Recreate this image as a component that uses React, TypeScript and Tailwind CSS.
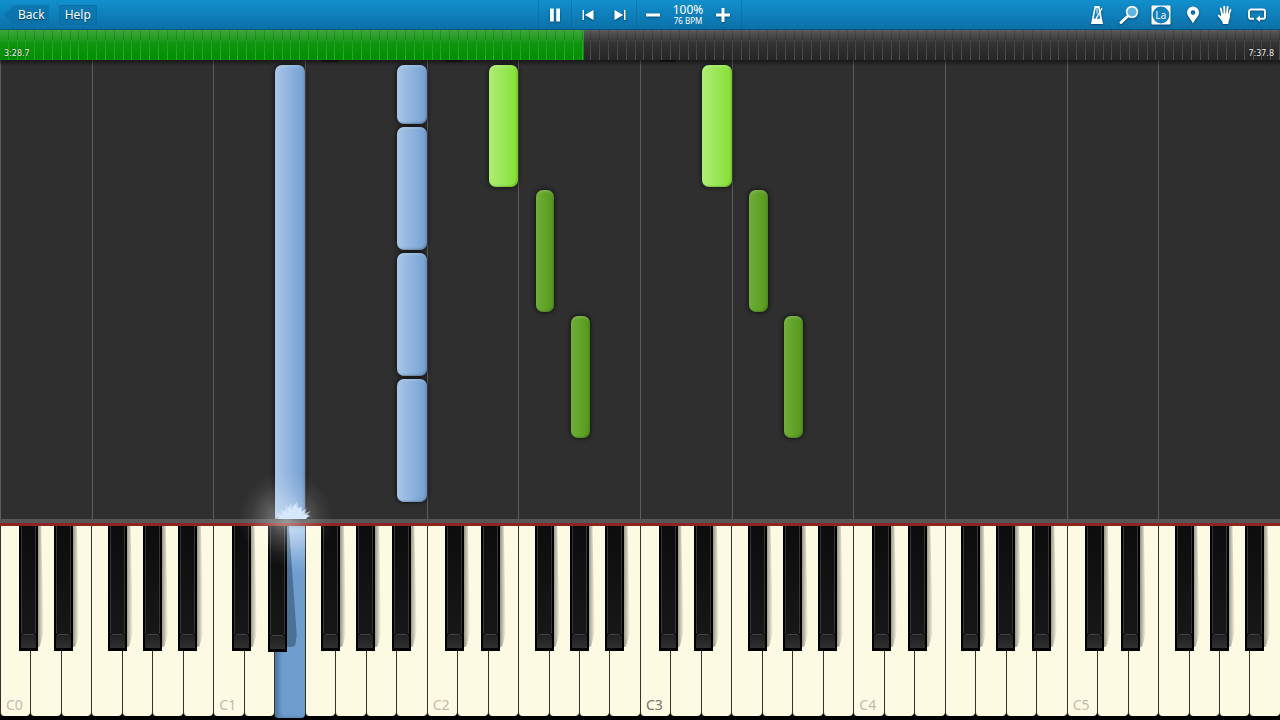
import type { ReactNode } from "react";

const OCTAVES = [0, 1, 2, 3, 4, 5];
const WHITE_KEYS = ["C", "D", "E", "F", "G", "A", "B"];

// left edge of each black key inside its octave
const BLACK_KEYS = [
  { name: "C#", left: "left-[8.7%]" },
  { name: "D#", left: "left-[25.5%]" },
  { name: "F#", left: "left-[50.6%]" },
  { name: "G#", left: "left-[67.1%]" },
  { name: "A#", left: "left-[83.6%]" },
];

const BLACK_OFFSET: Record<string, number> = {
  "C#": 0.087,
  "D#": 0.255,
  "F#": 0.506,
  "G#": 0.671,
  "A#": 0.836,
};

const ROLL_UNITS = 459;

const notes = [
  { octave: 1, key: "E", top: 5, length: 454, hand: "left" },
  { octave: 1, key: "B", top: 5, length: 59, hand: "left" },
  { octave: 1, key: "B", top: 67, length: 123, hand: "left" },
  { octave: 1, key: "B", top: 193, length: 123, hand: "left" },
  { octave: 1, key: "B", top: 319, length: 123, hand: "left" },
  { octave: 2, key: "E", top: 5, length: 122, hand: "right" },
  { octave: 2, key: "F#", top: 130, length: 122, hand: "right" },
  { octave: 2, key: "G#", top: 256, length: 122, hand: "right" },
  { octave: 3, key: "E", top: 5, length: 122, hand: "right" },
  { octave: 3, key: "F#", top: 130, length: 122, hand: "right" },
  { octave: 3, key: "G#", top: 256, length: 122, hand: "right" },
];

const upcoming = [
  { octave: 1, key: "F#" },
  { octave: 2, key: "C#" },
  { octave: 3, key: "C#" },
];

function keyLeft(octave: number, key: string) {
  const inside = key.endsWith("#")
    ? BLACK_OFFSET[key]
    : WHITE_KEYS.indexOf(key) / 7;
  return `${((octave + inside) / OCTAVES.length) * 100}%`;
}

function noteColor(hand: string, black: boolean) {
  if (hand === "left") return "bg-linear-to-r from-[#a9c6e8] to-[#739fd2]";
  return black
    ? "bg-linear-to-r from-[#6fae38] to-[#55991a]"
    : "bg-linear-to-r from-[#aeee72] to-[#84df31]";
}

function IconButton({ label, children }: { label: string; children: ReactNode }) {
  return (
    <button
      type="button"
      aria-label={label}
      className="flex h-full w-8 items-center justify-center drop-shadow-[0_1px_1px_rgba(0,40,80,0.6)]"
    >
      {children}
    </button>
  );
}

function Toolbar() {
  return (
    <header className="grid h-[30px] grid-cols-[1fr_auto_1fr] border-b border-[#075682] bg-linear-to-b from-[#1190cd] to-[#0c70a8] text-white">
      <div className="flex items-center gap-2.5 pl-1">
        <button
          type="button"
          className="h-5 bg-[#0b6fa6]/70 pr-1 pl-3.5 text-xs [clip-path:polygon(0_50%,10px_0,100%_0,100%_100%,10px_100%)] text-shadow-[0_1px_1px_rgba(0,0,0,0.5)]"
        >
          Back
        </button>
        <button
          type="button"
          className="h-5 rounded-xs border border-[#0a6497]/40 bg-[#0b6fa6]/60 px-[5px] text-xs/4 text-shadow-[0_1px_1px_rgba(0,0,0,0.5)]"
        >
          Help
        </button>
      </div>

      <div className="flex border-x border-[#0a6599]/50 pr-0.5">
        <IconButton label="Pause">
          <svg width="12" height="14" viewBox="0 0 12 14" fill="#fff">
            <path d="M1 0.5h3.800v13H1zM7.200 0.5H11v13H7.200z" />
          </svg>
        </IconButton>
        <div className="flex border-x border-[#0a6599]/50">
          <IconButton label="Previous">
            <svg width="12" height="12" viewBox="0 0 12 12" fill="#fff">
              <path d="M0.500 1h1.500v10H0.500zM11.500 1v10L2.800 6z" />
            </svg>
          </IconButton>
          <IconButton label="Next">
            <svg width="12" height="12" viewBox="0 0 12 12" fill="#fff">
              <path d="M0.500 1v10L9.200 6zM10 1h1.500v10H10z" />
            </svg>
          </IconButton>
        </div>
        <IconButton label="Slower">
          <svg width="14" height="14" viewBox="0 0 14 14" fill="#fff">
            <path d="M0 5.500h14v3H0z" />
          </svg>
        </IconButton>
        <div className="flex w-[38px] flex-col items-center justify-center">
          <span className="text-xs/3">100%</span>
          <span className="text-[8px]/[10px] whitespace-nowrap">76 BPM</span>
        </div>
        <IconButton label="Faster">
          <svg width="14" height="14" viewBox="0 0 14 14" fill="#fff">
            <path d="M0 5.500h5.500V0h3v5.500H14v3H8.500V14h-3V8.500H0z" />
          </svg>
        </IconButton>
      </div>

      <div className="flex justify-end pr-[7px]">
        <IconButton label="Metronome">
          <svg width="14" height="20" viewBox="0 0 14 20">
            <path d="M4.500 1h5L13 19H1z" fill="#fff" />
            <path d="M5.700 3.200h2.700l1.800 10.500H3.600z" fill="#1581b9" />
            <path d="M5.900 14 12 3.200" stroke="#fff" strokeWidth="1.400" />
            <path d="M7 3.500v5" stroke="#fff" strokeWidth="1" />
          </svg>
        </IconButton>
        <IconButton label="Zoom">
          <svg width="20" height="20" viewBox="0 0 20 20" fill="none" stroke="#fff">
            <circle cx="13" cy="7" r="5.400" fill="#62b4e0" strokeWidth="1.600" />
            <path d="m9 11-7 6.600" strokeWidth="2.800" strokeLinecap="round" />
          </svg>
        </IconButton>
        <IconButton label="Note names">
          <svg width="20" height="20" viewBox="0 0 20 20">
            <rect x="0.500" y="0.500" width="19" height="19" rx="1" fill="#fff" />
            <circle cx="10" cy="10" r="8.400" fill="#1280ba" />
            <text x="10" y="13.500" textAnchor="middle" fontSize="10" fill="#fff">
              La
            </text>
          </svg>
        </IconButton>
        <IconButton label="Bookmarks">
          <svg width="14" height="18" viewBox="0 0 14 18" fill="#fff">
            <path
              fillRule="evenodd"
              d="M7 0.500a6 6 0 0 1 6 6c0 4-4 6.500-6 11-2-4.500-6-7-6-11a6 6 0 0 1 6-6zM7 4.300a2.300 2.300 0 1 0 0 4.600 2.300 2.300 0 0 0 0-4.600z"
            />
          </svg>
        </IconButton>
        <IconButton label="Hands">
          <svg width="16" height="20" viewBox="0 0 16 20">
            <g stroke="#fff" strokeWidth="1.900" strokeLinecap="round" fill="none">
              <path d="M5.300 10 3.700 3.500M7.500 9.500 7.200 1.600M9.800 9.500l.8-7.500M11.500 10.500l2-5.500" />
              <path d="M5 14.500 1.800 10.600" />
            </g>
            <path d="M4.400 8.500h8.100l.4 2.500c.3 2.500-1.400 4-1.600 8H5.800c0-2.500-1.500-3.500-2.600-6z" fill="#fff" />
          </svg>
        </IconButton>
        <IconButton label="Loop">
          <svg width="18" height="14" viewBox="0 0 18 14" fill="none">
            <path
              d="M6 10.800H3a2 2 0 0 1-2-2V3.500a2 2 0 0 1 2-2h12a2 2 0 0 1 2 2v5.300a2 2 0 0 1-2 2h-3"
              stroke="#fff"
              strokeWidth="1.900"
            />
            <path d="M8 10.800 12 7.600v6.400z" fill="#fff" />
          </svg>
        </IconButton>
      </div>
    </header>
  );
}

function Timeline() {
  const elapsed = 208.7;
  const total = 457.8;

  return (
    <div className="relative h-[30px] bg-linear-to-b from-[#5a5a5a] via-[#333333] via-45% to-[#262626] font-['DejaVu_Sans',sans-serif] text-[8px]/[10px] text-[#f0f0f0]">
      <div
        className="absolute inset-y-0 left-0 bg-linear-to-b from-[#3aa83a] via-[#109510] via-45% to-[#009000]"
        style={{ width: `${(elapsed / total) * 100}%` }}
      />
      {/* one tick per bar */}
      <div className="absolute inset-0 flex">
        {Array.from({ length: 145 }, (_, i) => (
          <div key={i} className="flex flex-1 flex-col items-end">
            <div className="h-[10px] w-px bg-black/15" />
            <div className="w-px flex-1 bg-linear-to-b from-white/5 to-white/20" />
          </div>
        ))}
      </div>
      <div className="relative flex h-full items-end justify-between px-1 pb-px text-shadow-[0_0_2px_rgba(0,0,0,0.8)]">
        <span>3:28.7</span>
        <span className="pr-0.5">7:37.8</span>
      </div>
    </div>
  );
}

function Spark() {
  return (
    <div className="pointer-events-none absolute bottom-0 left-1/2 z-20">
      <div className="absolute -top-12 -left-13 size-24 rounded-full bg-[radial-gradient(circle,rgba(255,255,255,0.45)_0%,rgba(255,255,255,0.2)_30%,rgba(255,255,255,0.06)_52%,rgba(255,255,255,0)_70%)]" />
      <svg
        className="absolute -top-5 -left-4 max-w-none"
        width="40"
        height="20"
        viewBox="0 0 40 20"
        fill="#d6e8fd"
      >
        <path d="M4 20 3 14l4 2 0-6 4 4 1-9 3 7 2-8 3 7 3-9 2 9 3-4 0 6 5-4-2 5 6-2-4 4 4 1-5 2z" opacity="0.6" />
        <path d="M5 20l1-4 3 0 1-5 3 2 2-6 3 4 3-7 2 6 4-2 0 5 4-2-2 4 6 1-3 4z" />
      </svg>
    </div>
  );
}

function Roll() {
  return (
    <main className="relative min-h-64 flex-1 bg-[#2f2f2f]">
      <div className="absolute inset-0 flex">
        {OCTAVES.map((octave) => (
          <div key={octave} className="flex flex-1">
            <div className="flex-3 border-l border-[#5c5c5c]" />
            <div className="flex-4 border-l border-[#5c5c5c]" />
          </div>
        ))}
      </div>
      <div className="absolute inset-x-0 top-0 h-1.5 bg-linear-to-b from-black/50 to-transparent" />

      {upcoming.map((n) => (
        <div
          key={`${n.octave}${n.key}`}
          className="absolute top-0 h-0.5 w-[1.4%] rounded-b-full bg-black/50"
          style={{ left: keyLeft(n.octave, n.key) }}
        />
      ))}

      {notes.map((n) => {
        const black = n.key.endsWith("#");
        const playing = n.top + n.length >= ROLL_UNITS;
        return (
          <div
            key={`${n.octave}${n.key}${n.top}`}
            className="absolute pl-px"
            style={{
              left: keyLeft(n.octave, n.key),
              top: `${(n.top / ROLL_UNITS) * 100}%`,
              height: `${(n.length / ROLL_UNITS) * 100}%`,
              width: black ? "1.54%" : "2.4%",
            }}
          >
            <div
              className={`h-full shadow-[0_0_4px_1px_rgba(0,0,0,0.55),inset_0_2px_2px_rgba(255,255,255,0.15),inset_-1px_-1px_2px_rgba(0,0,0,0.2)] ${
                playing ? "rounded-t-[7px]" : "rounded-[7px]"
              } ${noteColor(n.hand, black)}`}
            />
            {playing && <Spark />}
          </div>
        );
      })}
    </main>
  );
}

function BlackKey({ label, left, pressed }: { label: string; left: string; pressed: boolean }) {
  return (
    <div className={`absolute top-0 h-[125px] w-[8.9%] ${left}`}>
      <div
        className={`absolute top-0 bottom-1 left-1/2 rounded-br-md ${
          pressed
            ? "-right-2.5 bg-[#33536f]/60 [clip-path:polygon(0_0,60%_0,100%_90%,92%_100%,0_100%)]"
            : "-right-1.5 bg-linear-to-r from-[#8a877a] from-55% to-transparent [clip-path:polygon(0_0,85%_0,100%_88%,75%_100%,0_100%)]"
        }`}
      />
      <button
        type="button"
        aria-label={label}
        className={`relative flex w-full flex-col bg-black px-0.5 pb-[3px] ${
          pressed ? "h-[126px]" : "h-full"
        }`}
      >
        <span className="w-full flex-1 border-x border-[#363636] bg-linear-to-b from-[#0d0d0d] to-[#171717]" />
        <span className="h-3.5 w-full rounded-t-sm border-t border-[#444444] bg-linear-to-b from-[#202020] to-[#303030]" />
      </button>
    </div>
  );
}

function Keyboard() {
  return (
    <section
      aria-label="Keyboard"
      className="border-t-4 border-[#565656] bg-black pb-1"
    >
      <div className="h-[3px] bg-[#8f2523]" />
      <div className="flex h-[190px]">
        {OCTAVES.map((octave) => (
          <div key={octave} className="relative flex flex-1">
            {WHITE_KEYS.map((key) => {
              const pressed = octave === 1 && key === "E";
              return (
                <button
                  key={key}
                  type="button"
                  aria-label={`${key}${octave}`}
                  className={`flex flex-1 items-end rounded-b-[4px] border-l border-[#33322c] pb-[3px] pl-[5px] text-sm/4 ${
                    pressed
                      ? "h-[192px] bg-linear-to-b from-[#a9cbee] to-[#6f9dce] to-25% shadow-[inset_4px_0_4px_rgba(30,60,100,0.4)]"
                      : "bg-[#fdfae3]"
                  } ${octave === 3 ? "text-[#77756a]" : "text-[#bfbda9]"}`}
                >
                  {key === "C" && `C${octave}`}
                </button>
              );
            })}
            {BLACK_KEYS.map((k) => (
              <BlackKey
                key={k.name}
                label={`${k.name}${octave}`}
                left={k.left}
                pressed={octave === 1 && k.name === "D#"}
              />
            ))}
          </div>
        ))}
      </div>
    </section>
  );
}

export default function App() {
  return (
    <div className="flex min-h-screen flex-col overflow-hidden bg-black font-['Noto_Sans','Open_Sans',sans-serif]">
      <Toolbar />
      <Timeline />
      <Roll />
      <Keyboard />
    </div>
  );
}
